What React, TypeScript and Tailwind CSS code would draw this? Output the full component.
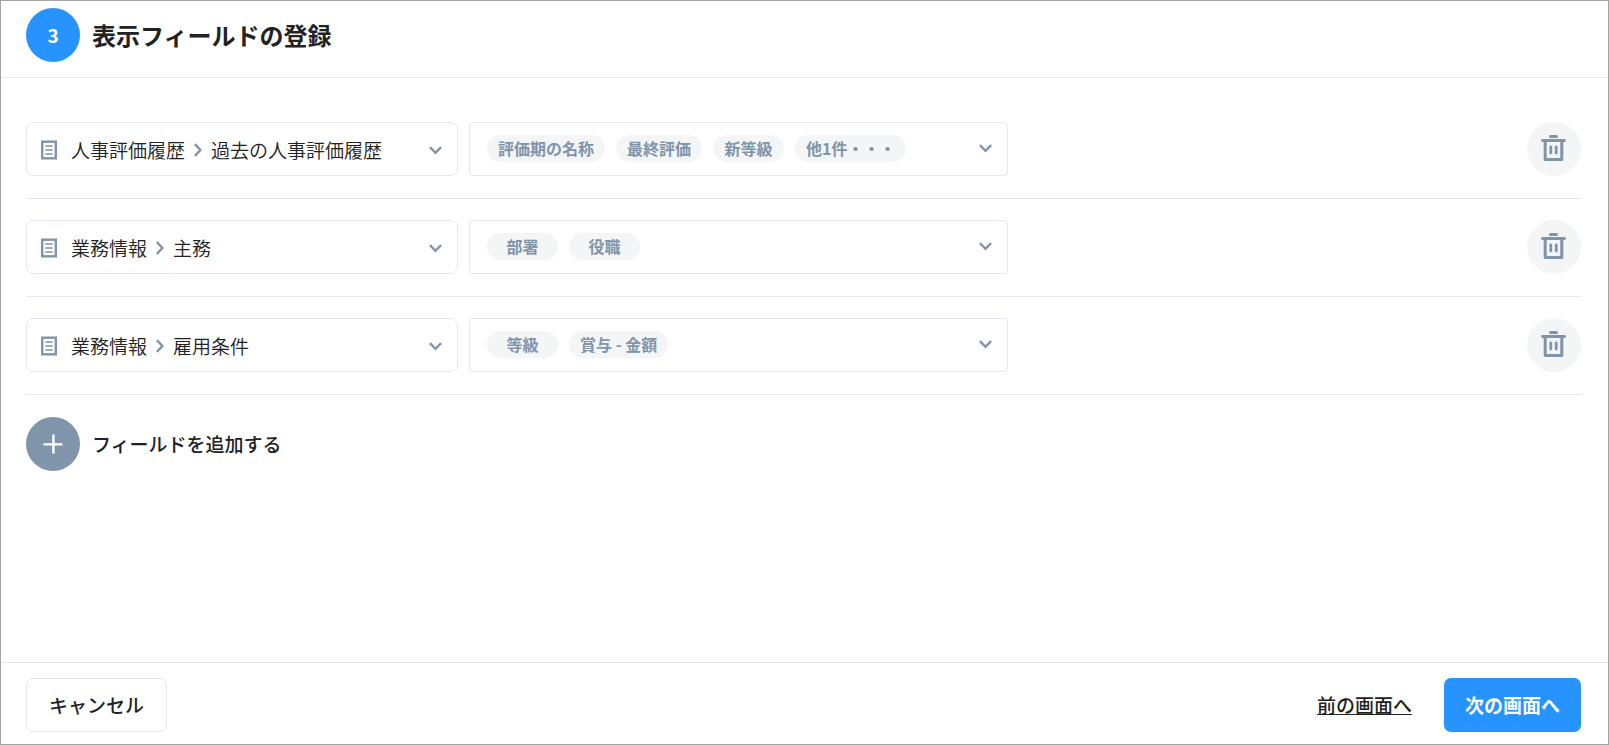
import { useState } from "react";

type Row = { path: string; options: string[]; tags: string[] };

const paths = ["人事評価履歴/過去の人事評価履歴", "業務情報/主務", "業務情報/雇用条件"];

const initialRows: Row[] = [
  { path: paths[0], options: paths, tags: ["評価期の名称", "最終評価", "新等級", "他1件・・・"] },
  { path: paths[1], options: paths, tags: ["部署", "役職"] },
  { path: paths[2], options: paths, tags: ["等級", "賞与 - 金額"] },
];

function SheetIcon() {
  return (
    <svg className="h-5 w-4 shrink-0 text-[#8094aa]" viewBox="0 0 16 20" fill="none" stroke="currentColor" aria-hidden="true">
      <rect x="1.2" y="1.7" width="13.6" height="16.6" strokeWidth="2.4" />
      <path d="M5 6h6M5 10h6M5 14h6" strokeWidth="1.7" strokeLinecap="round" />
    </svg>
  );
}

function ChevronDown() {
  return (
    <svg className="h-[9px] w-[13px] shrink-0 text-[#8094aa]" viewBox="0 0 13 9" fill="none" stroke="currentColor" strokeWidth="2.4" aria-hidden="true">
      <path d="M0.9 1.2l5.6 5.7L12.1 1.2" />
    </svg>
  );
}

function ChevronRight() {
  return (
    <svg className="h-[14px] w-2 shrink-0 text-[#8094aa]" viewBox="0 0 8 14" fill="none" stroke="currentColor" strokeWidth="2.4" aria-hidden="true">
      <path d="M0.9 1.2L6.4 7L0.9 12.8" />
    </svg>
  );
}

function TrashIcon() {
  return (
    <svg className="h-[26px] w-[26px] text-[#8094aa]" viewBox="0 0 26 26" fill="none" stroke="currentColor" aria-hidden="true">
      <path d="M9.5 1.5h6" strokeWidth="3" strokeLinecap="round" />
      <path d="M1.5 5.5h22" strokeWidth="2.8" strokeLinecap="round" />
      <path d="M4.2 6v18.5h16.6V6" strokeWidth="3" strokeLinejoin="round" />
      <path d="M9.8 11.8v6.2M15.2 11.8v6.2" strokeWidth="2.8" strokeLinecap="round" />
    </svg>
  );
}

function PlusIcon() {
  return (
    <svg className="h-5 w-5" viewBox="0 0 20 20" stroke="currentColor" strokeWidth="2.4" aria-hidden="true">
      <path d="M10.4 0.5v19M0.5 10.4h19" />
    </svg>
  );
}

function PathSelect({ value, options, onChange }: { value: string; options: string[]; onChange: (v: string) => void }) {
  const [parent, child] = value.split("/");
  return (
    <div className="relative flex h-[54px] min-w-0 basis-[432px] items-center rounded-[7px] border border-[#e2e8ed] pt-[2px] pr-[15px] pl-[14px] focus-within:border-[#2693ff]">
      <SheetIcon />
      <span className="ml-[14px] flex min-w-0 flex-1 items-center gap-[9px] text-[19px] font-[350] whitespace-nowrap">
        <span>{parent}</span>
        <ChevronRight />
        <span>{child}</span>
      </span>
      <ChevronDown />
      <select
        aria-label="表示する項目"
        value={value}
        onChange={(e) => onChange(e.target.value)}
        className="absolute inset-0 h-full w-full cursor-pointer opacity-0"
      >
        {options.map((o) => (
          <option key={o} value={o}>
            {o.replace("/", " > ")}
          </option>
        ))}
      </select>
    </div>
  );
}

function TagSelect({ tags }: { tags: string[] }) {
  return (
    <button
      type="button"
      aria-haspopup="listbox"
      className="flex h-[54px] min-w-0 basis-[539px] cursor-pointer items-center rounded-sm border border-[#e2e8ed] pr-[15px] pb-px pl-[17px]"
    >
      <span className="flex flex-1 items-center gap-[11px]">
        {tags.map((t) => (
          <span
            key={t}
            className="min-w-[71px] rounded-full bg-[#f3f5f7] px-[11px] text-center text-base leading-[27px] font-bold whitespace-nowrap text-[#8094aa]"
          >
            {t}
          </span>
        ))}
      </span>
      <ChevronDown />
    </button>
  );
}

export default function App() {
  const [rows, setRows] = useState(initialRows);

  return (
    <div className="flex min-h-screen flex-col border border-[#a3a3a3] bg-white font-['Noto_Sans_CJK_JP',sans-serif] text-[#222]">
      <header className="flex items-center gap-3 border-b border-[#e2e8ea] pt-[7px] pr-[27px] pb-[15px] pl-[25px]">
        <span className="flex size-[54px] items-center justify-center rounded-full bg-[#2693ff] text-[19px] font-bold text-white">3</span>
        <h1 className="text-2xl font-bold">表示フィールドの登録</h1>
      </header>

      <main className="flex-1 pt-[23px] pr-[27px] pl-[25px]">
        <ul>
          {rows.map((row, i) => (
            <li key={i} className="flex items-center gap-[11px] border-b border-[#e2e8ed] pt-[21px] pb-[22px]">
              <PathSelect
                value={row.path}
                options={row.options}
                onChange={(path) => setRows(rows.map((r, j) => (j === i ? { ...r, path } : r)))}
              />
              <TagSelect tags={row.tags} />
              <button
                type="button"
                aria-label="削除"
                onClick={() => setRows(rows.filter((_, j) => j !== i))}
                className="ml-auto flex size-[54px] shrink-0 cursor-pointer items-center justify-center rounded-full bg-[#f3f5f7] pb-[2px]"
              >
                <TrashIcon />
              </button>
            </li>
          ))}
        </ul>
        <button type="button" className="mt-[22px] flex cursor-pointer items-center gap-3 text-[19px] font-medium">
          <span className="flex size-[54px] items-center justify-center rounded-full bg-[#8094aa] text-white">
            <PlusIcon />
          </span>
          フィールドを追加する
        </button>
      </main>

      <footer className="flex items-center border-t border-[#e2e8ed] pt-[15px] pr-[27px] pb-3 pl-[25px] text-[19px]">
        <button type="button" className="h-[54px] cursor-pointer rounded-[7px] border border-[#e2e8ed] px-[22px] font-medium">
          キャンセル
        </button>
        <a href="#prev" className="mr-8 ml-auto font-medium underline">
          前の画面へ
        </a>
        <button type="button" className="h-[54px] cursor-pointer rounded-[7px] bg-[#2693ff] px-[21px] font-bold text-white">
          次の画面へ
        </button>
      </footer>
    </div>
  );
}
